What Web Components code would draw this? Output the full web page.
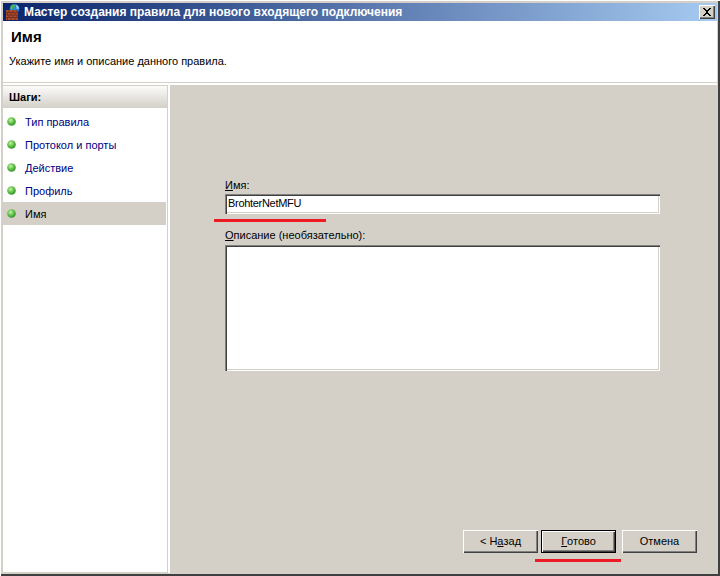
<!DOCTYPE html>
<html>
<head>
<meta charset="utf-8">
<title>Мастер</title>
<style>
  html, body { margin: 0; padding: 0; background: #d4d0c8; }
  body { font: 11px "Liberation Sans", Arial, sans-serif; color: #000; }
</style>
</head>
<body>
<wizard-window>
  <title-bar slot="title">Мастер создания правила для нового входящего подключения</title-bar>
  <wizard-header slot="header" heading="Имя">Укажите имя и описание данного правила.</wizard-header>
  <step-list slot="steps" heading="Шаги:">
    <step-item>Тип правила</step-item>
    <step-item>Протокол и порты</step-item>
    <step-item>Действие</step-item>
    <step-item>Профиль</step-item>
    <step-item current>Имя</step-item>
  </step-list>
  <form-panel slot="main">
    <form-field>
      <span slot="label"><u>И</u>мя:</span>
      <text-box>BrohterNetMFU</text-box>
    </form-field>
    <form-field>
      <span slot="label"><u>О</u>писание (необязательно):</span>
      <text-box multiline></text-box>
    </form-field>
    <button-row slot="buttons">
      <win-button>&lt; Н<u>а</u>зад</win-button>
      <win-button default><u>Г</u>отово</win-button>
      <win-button style="margin-left:3px">Отмена</win-button>
    </button-row>
  </form-panel>
</wizard-window>

<script>
function define(name, css, html, extra) {
  const tpl = document.createElement('template');
  tpl.innerHTML = `<style>${css}</style>${html}`;
  class El extends HTMLElement {
    constructor() {
      super();
      this.attachShadow({ mode: 'open' });
      this.shadowRoot.appendChild(tpl.content.cloneNode(true));
    }
    connectedCallback() {
      if (extra) extra(this);
    }
  }
  customElements.define(name, El);
}

define('wizard-window', `
  :host {
    display: flex; flex-direction: column; box-sizing: border-box;
    position: relative;
    width: 720px; height: 576px; padding: 3px 3px 3px 3px;
    background: #d4d0c8;
    box-shadow: inset 1px 1px 0 #ffffff, inset -1px -1px 0 #404040, inset -2px -2px 0 #404040;
  }
  .body { flex: 1; display: flex; flex-direction: column; background: #fff; min-height: 0; }
  .sep { height: 1px; background: #d4d0c8; margin-bottom: 2px; }
  .columns { flex: 1; display: flex; min-height: 0; }
  .mark { position: absolute; height: 3px; background: #ed1c24; }
  .m1 { left: 214px; top: 219px; width: 112px; }
  .m2 { left: 535px; top: 559px; width: 86px; }
`, `
  <slot name="title"></slot>
  <div class="body">
    <slot name="header"></slot>
    <div class="sep"></div>
    <div class="columns">
      <slot name="steps"></slot>
      <slot name="main"></slot>
    </div>
  </div>
  <div class="mark m1"></div>
  <div class="mark m2"></div>
`);

define('title-bar', `
  :host {
    display: flex; align-items: center; height: 18px; flex: none;
    background: linear-gradient(90deg, #0a246a, #a6caf0);
    color: #fff; font: bold 12px "Liberation Sans", Arial, sans-serif;
    white-space: nowrap;
  }
  svg { margin: 0 3px 0 2px; flex: none; }
  .text { flex: 1; }
  .close {
    box-sizing: border-box; width: 16px; height: 14px; margin-right: 2px;
    background: #d4d0c8;
    box-shadow: inset 1px 1px 0 #fff, inset -1px -1px 0 #404040, inset -2px -2px 0 #808080;
    display: flex; align-items: center; justify-content: center;
  }
`, `
  <svg width="16" height="16" viewBox="0 0 16 16">
    <circle cx="9.500" cy="4.800" r="4.800" fill="#2a86dc"/>
    <path d="M6 1.500c2-1.300 4-1 4 .5S8.200 3.500 7.700 5 6 5.500 5.300 4.300z" fill="#45b84c"/>
    <path d="M11 1c2 .5 3 2 3.200 3.500L11.800 5z" fill="#9bd6f7"/>
    <rect x="1" y="6" width="12" height="10" fill="#a84c32"/>
    <path d="M1 8.500h12M1 11h12M1 13.500h12M4 6v2.500M8 6v2.500M12 6v2.500M2.500 8.500V11M6 8.500V11M10 8.500V11M4 11v2.500M8 11v2.500M12 11v2.500M2.500 13.500V16M6 13.500V16M10 13.500V16" stroke="#6e2a18" stroke-width=".8" fill="none"/>
  </svg>
  <span class="text"><slot></slot></span>
  <span class="close">
    <svg style="margin:0 0 0 -1px" width="8" height="8" viewBox="0 0 8 8"><path d="M0 0h2v1h1v1h2V1h1V0h2v1H7v1H6v1H5v2h1v1h1v1h1v1H6V7H5V6H3v1H2v1H0V7h1V6h1V5h1V3H2V2H1V1H0z" fill="#000"/></svg>
  </span>
`);

define('wizard-header', `
  :host { display: block; height: 61px; box-sizing: border-box; padding: 7px 0 0 6px; flex: none; }
  .h { font: bold 15px/17px "Liberation Sans", Arial, sans-serif; padding-left: 2px; }
  .d { margin-top: 9px; line-height: 15px; }
`, `
  <div class="h"></div>
  <div class="d"><slot></slot></div>
`, el => { el.shadowRoot.querySelector('.h').textContent = el.getAttribute('heading'); });

define('step-list', `
  :host {
    display: flex; flex-direction: column; flex: none; box-sizing: border-box;
    width: 165px; background: #fff;
    border-top: 1px solid #d4d0c8; border-right: 1px solid #d4d0c8; border-bottom: 1px solid #d4d0c8;
  }
  .h {
    height: 22px; display: flex; align-items: center; padding-left: 6px; margin-bottom: 2px;
    font-weight: bold;
    background: linear-gradient(#fbfbfa, #d4d0c8);
  }
`, `
  <div class="h"></div>
  <slot></slot>
`, el => { el.shadowRoot.querySelector('.h').textContent = el.getAttribute('heading'); });

define('step-item', `
  :host {
    display: flex; align-items: center; height: 23px; flex: none;
    color: #000080; margin-right: 1px;
  }
  :host([current]) { background: #d4d0c8; color: #000; }
  svg { margin: 0 9px 0 4px; flex: none; }
`, `
  <svg width="9" height="9" viewBox="0 0 9 9">
    <defs><radialGradient id="g" cx=".4" cy=".35" r=".7">
      <stop offset="0" stop-color="#c8f0b0"/><stop offset=".5" stop-color="#63c447"/><stop offset="1" stop-color="#2e8b2a"/>
    </radialGradient></defs>
    <circle cx="4.500" cy="4.500" r="4.300" fill="url(#g)"/>
  </svg>
  <span><slot></slot></span>
`);

define('form-panel', `
  :host {
    flex: 1; display: flex; flex-direction: column; box-sizing: border-box;
    margin-left: 2px; background: #d4d0c8;
    padding: 93px 20px 20px 55px;
  }
  .fields { display: flex; flex-direction: column; gap: 14px; padding-right: 37px; }
  .buttons { margin-top: auto; }
`, `
  <div class="fields"><slot></slot></div>
  <div class="buttons"><slot name="buttons"></slot></div>
`);

define('form-field', `
  :host { display: flex; flex-direction: column; }
  .l { line-height: 15px; margin-bottom: 1px; }
`, `
  <div class="l"><slot name="label"></slot></div>
  <slot></slot>
`);

define('text-box', `
  :host {
    display: block; box-sizing: border-box; height: 20px; padding: 2px 2px 0 3px;
    background: #fff; line-height: 15px; letter-spacing: -.3px;
    box-shadow: inset 1px 1px 0 #808080, inset 2px 2px 0 #404040, inset -1px -1px 0 #fff, inset -2px -2px 0 #d4d0c8;
  }
  :host([multiline]) { height: 126px; margin-top: 1px; }
`, `<slot></slot>`);

define('button-row', `
  :host { display: flex; justify-content: flex-end; gap: 3px; }
`, `<slot></slot>`);

define('win-button', `
  :host {
    display: flex; align-items: center; justify-content: center; box-sizing: border-box;
    width: 75px; height: 23px; padding-bottom: 2px; background: #d4d0c8;
    box-shadow: inset 1px 1px 0 #fff, inset -1px -1px 0 #404040, inset -2px -2px 0 #808080;
  }
  :host([default]) {
    box-shadow: inset 0 0 0 1px #000, inset 2px 2px 0 #fff, inset -2px -2px 0 #404040, inset -3px -3px 0 #808080;
  }
`, `<slot></slot>`);
</script>
</body>
</html>
